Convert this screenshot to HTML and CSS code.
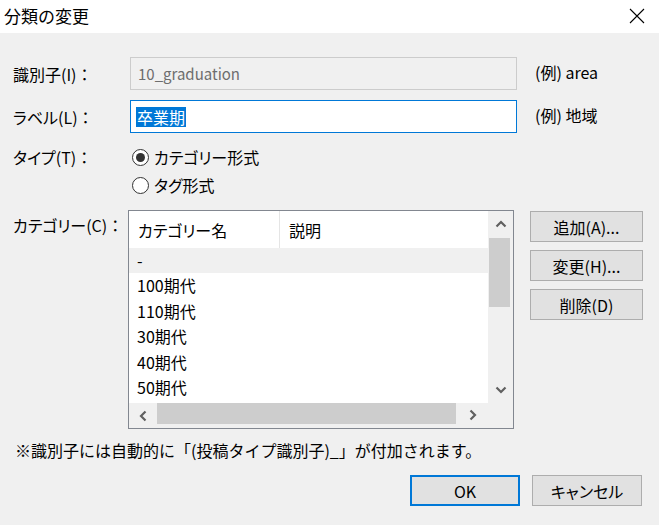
FILE: index.html
```html
<!DOCTYPE html>
<html lang="ja">
<head>
<meta charset="utf-8">
<title>分類の変更</title>
<link rel="stylesheet" href="styles.css">
</head>
<body>
<div class="window">
  <div class="titlebar">
    <span class="title">分類の変更</span>
    <svg class="close" width="16" height="16" viewBox="0 0 16 16"><path d="M1 1 L15 15 M15 1 L1 15" stroke="#000" stroke-width="1.1" fill="none"/></svg>
  </div>
  <div class="body">
    <div class="row row-id">
      <span class="label">識別子(I)<span class="colon">：</span></span>
      <div class="textbox disabled">10_graduation</div>
      <span class="example">(例) area</span>
    </div>
    <div class="row row-label">
      <span class="label">ラベル(L)<span class="colon">：</span></span>
      <div class="textbox focused"><span class="sel">卒業期</span></div>
      <span class="example">(例) 地域</span>
    </div>
    <div class="row row-type">
      <span class="label label-type">タイプ(T)<span class="colon">：</span></span>
      <div class="radios">
        <div class="radio-row"><span class="radio checked"></span><span>カテゴリー形式</span></div>
        <div class="radio-row"><span class="radio"></span><span>タグ形式</span></div>
      </div>
    </div>
    <div class="row row-cat">
      <span class="label label-cat">カテゴリー(C)<span class="colon">：</span></span>
      <div class="listview">
        <div class="lv-main">
          <div class="lv-content">
            <div class="lv-header">
              <div class="col1">カテゴリー名</div>
              <div class="col2">説明</div>
            </div>
            <div class="lv-row selected">-</div>
            <div class="lv-row">100期代</div>
            <div class="lv-row">110期代</div>
            <div class="lv-row">30期代</div>
            <div class="lv-row">40期代</div>
            <div class="lv-row">50期代</div>
          </div>
          <div class="vscroll">
            <div class="sb-btn up"><svg width="12" height="8" viewBox="0 0 12 8"><path d="M1.5 6.5 L6 2 L10.5 6.5" stroke="#606060" stroke-width="2.2" fill="none"/></svg></div>
            <div class="vthumb"></div>
            <div class="vspace"></div>
            <div class="sb-btn down"><svg width="12" height="8" viewBox="0 0 12 8"><path d="M1.5 1.5 L6 6 L10.5 1.5" stroke="#606060" stroke-width="2.2" fill="none"/></svg></div>
          </div>
        </div>
        <div class="hscroll">
          <div class="sb-btn left"><svg width="8" height="12" viewBox="0 0 8 12"><path d="M6.5 1.5 L2 6 L6.5 10.5" stroke="#606060" stroke-width="2.2" fill="none"/></svg></div>
          <div class="hthumb"></div>
          <div class="sb-btn right"><svg width="8" height="12" viewBox="0 0 8 12"><path d="M1.5 1.5 L6 6 L1.5 10.5" stroke="#606060" stroke-width="2.2" fill="none"/></svg></div>
          <div class="corner"></div>
        </div>
      </div>
      <div class="side-buttons">
        <button class="btn">追加(A)...</button>
        <button class="btn">変更(H)...</button>
        <button class="btn">削除(D)</button>
      </div>
    </div>
    <p class="note">※識別子には自動的に「(投稿タイプ識別子)_」が付加されます。</p>
    <div class="footer">
      <button class="btn btn-foot default">OK</button>
      <button class="btn btn-foot">キャンセル</button>
    </div>
  </div>
</div>
</body>
</html>
```

FILE: styles.css
```css
html, body {
  margin: 0;
  padding: 0;
}
body {
  font-family: "Noto Sans CJK JP", "Noto Sans", sans-serif;
  font-size: 16px;
  font-feature-settings: "palt";
  color: #000;
  background: #f0f0f0;
}
.window {
  width: 659px;
  height: 525px;
  display: flex;
  flex-direction: column;
}
.titlebar {
  height: 33px;
  background: #fff;
  display: flex;
  align-items: center;
  justify-content: space-between;
  padding: 0 14px 0 4px;
  box-sizing: border-box;
}
.title {
  font-size: 17px;
  line-height: 20px;
  margin-top: -1px;
  font-feature-settings: normal;
}
.close {
  margin-top: -2px;
}
.body {
  flex: 1;
  background: #f0f0f0;
  padding: 24px 17px 0 13px;
  box-sizing: border-box;
}
.row {
  display: flex;
  align-items: center;
}
.label {
  width: 117px;
  flex: none;
  line-height: 20px;
}
.colon {
  font-feature-settings: normal;
}
.textbox {
  width: 387px;
  height: 33px;
  box-sizing: border-box;
  flex: none;
  display: flex;
  align-items: center;
  padding-left: 7px;
  line-height: 20px;
}
.textbox.disabled {
  border: 1px solid #cccccc;
  background: #f0f0f0;
  color: #6d6d6d;
  font-size: 15px;
}
.textbox.focused {
  border: 1px solid #0078d7;
  background: #fff;
  padding-left: 5px;
}
.sel {
  background: #0078d7;
  color: #fff;
  line-height: 20px;
  padding: 0 1px;
}
.example {
  margin-left: 18px;
  line-height: 20px;
  margin-top: -4px;
}
.row-label {
  margin-top: 10px;
}
.row-type {
  margin-top: 10px;
  align-items: flex-start;
}
.label-type {
  width: 119px;
  padding-top: 4px;
}
.radios {
  display: flex;
  flex-direction: column;
}
.radio-row {
  height: 28px;
  display: flex;
  align-items: center;
  gap: 5px;
  line-height: 20px;
}
.radio {
  width: 17px;
  height: 17px;
  box-sizing: border-box;
  border: 1px solid #333;
  border-radius: 50%;
  background: #fff;
  display: flex;
  align-items: center;
  justify-content: center;
}
.radio.checked::after {
  content: "";
  width: 9px;
  height: 9px;
  border-radius: 50%;
  background: #333;
}
.row-cat {
  margin-top: 11px;
  align-items: flex-start;
}
.label-cat {
  width: 115px;
  padding-top: 5px;
}
.listview {
  width: 386px;
  height: 219px;
  box-sizing: border-box;
  border: 1px solid #828790;
  background: #fff;
  display: flex;
  flex-direction: column;
  flex: none;
}
.lv-main {
  display: flex;
  flex: 1;
  min-height: 0;
}
.lv-content {
  flex: 1;
  overflow: hidden;
}
.lv-header {
  height: 37px;
  display: flex;
  align-items: stretch;
}
.lv-header .col1 {
  width: 151px;
  border-right: 1px solid #e5e5e5;
  padding-left: 9px;
  box-sizing: border-box;
  display: flex;
  align-items: center;
}
.lv-header .col2 {
  padding-left: 9px;
  display: flex;
  align-items: center;
}
.lv-row {
  height: 25.4px;
  line-height: 25px;
  padding-left: 8px;
}
.lv-row.selected {
  background: #f0f0f0;
}
.vscroll {
  width: 25px;
  background: #f0f0f0;
  display: flex;
  flex-direction: column;
}
.sb-btn {
  display: flex;
  align-items: center;
  justify-content: center;
}
.vscroll .sb-btn {
  height: 26px;
}
.vthumb {
  height: 69px;
  margin: 1px 3px 0 1px;
  background: #cdcdcd;
}
.vspace {
  flex: 1;
}
.hscroll {
  height: 25px;
  background: #f0f0f0;
  display: flex;
}
.hscroll .left {
  width: 28px;
}
.hthumb {
  width: 299px;
  height: 21px;
  margin-top: 0;
  background: #cdcdcd;
}
.hscroll .right {
  width: 31px;
  padding-left: 2px;
  box-sizing: border-box;
  margin-top: -2px;
}
.corner {
  flex: 1;
  background: #f0f0f0;
}
.side-buttons {
  margin-left: 16px;
  margin-top: 1px;
  display: flex;
  flex-direction: column;
  gap: 8px;
}
.btn {
  font-family: inherit;
  font-size: 16px;
  font-feature-settings: "palt";
  color: #000;
  background: #e1e1e1;
  border: 1px solid #adadad;
  width: 113px;
  height: 31px;
  padding: 0;
  line-height: 20px;
}
.note {
  margin: 11px 0 0 2px;
  line-height: 20px;
  font-feature-settings: normal;
}
.footer {
  margin-top: 15px;
  display: flex;
  justify-content: flex-end;
  gap: 12px;
}
.btn-foot {
  width: 110px;
}
.btn-foot.default {
  border: 2px solid #0078d7;
}
```
